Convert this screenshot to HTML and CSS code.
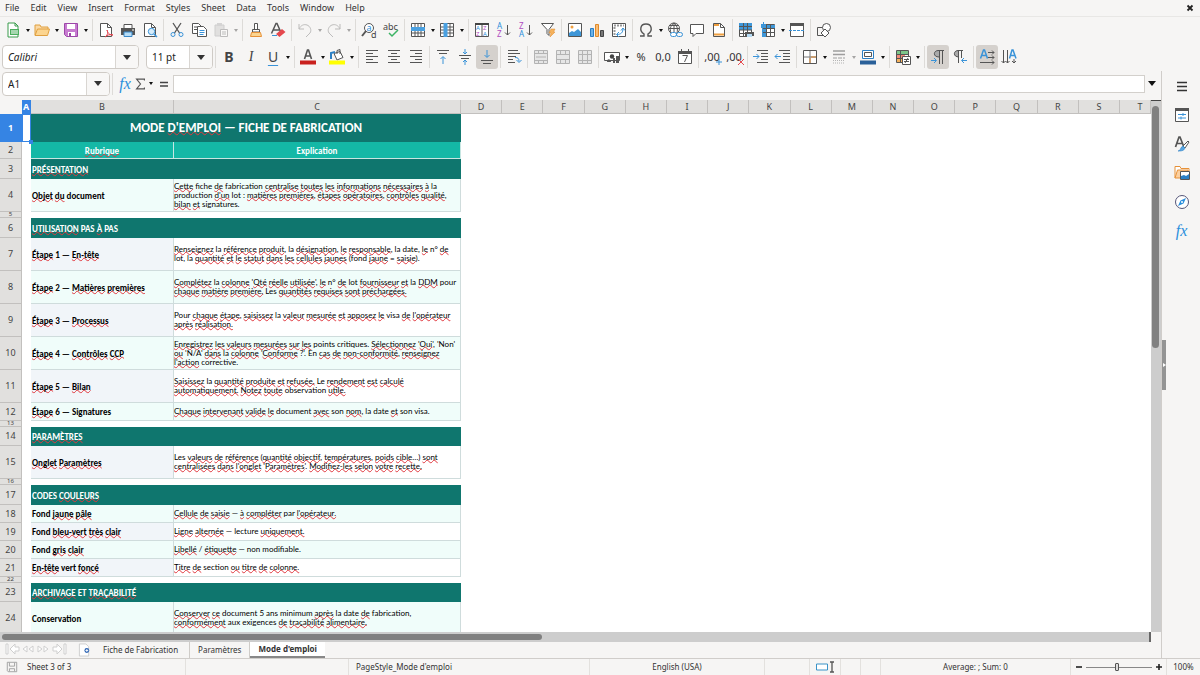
FILE: index.html
```html
<!DOCTYPE html>
<html lang="fr">
<head>
<meta charset="utf-8">
<title>Mode d'emploi</title>
<link rel="stylesheet" href="styles.css">
</head>
<body>
<header class="menubar">
  <nav class="menus">
    <button>File</button><button>Edit</button><button>View</button><button>Insert</button><button>Format</button><button>Styles</button><button>Sheet</button><button>Data</button><button>Tools</button><button>Window</button><button>Help</button>
  </nav>
  <button class="close" aria-label="Close"><svg viewBox="0 0 8 8"><path d="M1.5 1.5l5 5M6.500 1.500l-5 5" stroke="#222" stroke-width="1.800"/></svg></button>
</header>

<div class="toolbar">
  <button aria-label="New"><svg viewBox="0 0 16 16"><path class="w" d="M3 1h7l3 3v11H3z" style="stroke:#3a9b4c"/><path d="M10 1v3h3" stroke="#3a9b4c"/><path fill="#4cae5e" d="M5 7h9v6H5z"/><path d="M6 9h7M6 11h7" stroke="#fff"/></svg></button><button class="dd" aria-label="New options"></button>
  <button aria-label="Open"><svg viewBox="0 0 16 16"><path d="M1 13V3h5l1 2h7v3" fill="#fbd9a5" stroke="#e0a040"/><path d="M1 13.500L3.500 7H15.500l-2 6.500z" fill="#fcd590" stroke="#e0a040"/></svg></button><button class="dd" aria-label="Open options"></button>
  <button aria-label="Save"><svg viewBox="0 0 16 16"><path d="M1.500 1.500h13v13h-11l-2-2z" fill="#c77bd0" stroke="#9c46a8"/><path d="M4 2h8v5H4z" fill="#fff"/><path d="M5 10h7v4H5z" fill="#fff"/><path d="M6 11h2v3H6z" fill="#9c46a8"/></svg></button><button class="dd" aria-label="Save options"></button>
  <i class="sep"></i>
  <button aria-label="Export as PDF"><svg viewBox="0 0 16 16"><path class="w" d="M2.500 1.500h7l4 4v9h-11z"/><path class="k" d="M9.500 1.500v4h4"/><path d="M7 15c3-2 3-5 2-7 1 4 3 5 6 5-3-1-6 0-8 2z" fill="#fff" stroke="#e2404a"/></svg></button>
  <button aria-label="Print"><svg viewBox="0 0 16 16"><path d="M1 6h14v7H1z" fill="#555"/><path class="w" d="M4 2.500h8v4H4z"/><path d="M4 10h8v4.500H4z" fill="#b7dcf5" stroke="#3a89c9"/><path d="M12 8h2" stroke="#fff"/></svg></button>
  <button aria-label="Print preview"><svg viewBox="0 0 16 16"><path class="w" d="M2.500 1.500h7l4 4v9h-11z"/><path class="k" d="M9.500 1.500v4h4"/><circle cx="9.500" cy="9.500" r="3.200" fill="#d7ecfa" stroke="#3a93d8"/><path d="M12 12l3 3" stroke="#3a93d8" stroke-width="1.500"/></svg></button>
  <i class="sep"></i>
  <button aria-label="Cut"><svg viewBox="0 0 16 16"><path class="k" d="M4 1l6.500 10M12 1L5.500 11" style="stroke-width:1.300"/><circle class="b" cx="4" cy="12.500" r="2"/><circle class="b" cx="12" cy="12.500" r="2"/></svg></button>
  <button aria-label="Copy"><svg viewBox="0 0 16 16"><path class="w" d="M1.500 1.500h6l3 3v7h-9z"/><path class="w" d="M6.500 4.500h6l3 3v7h-9z"/><path class="k" d="M3 5h3M3 7.500h3"/><path class="b" d="M8.500 8.500h5M8.500 10.500h5M8.500 12.500h4"/></svg></button>
  <button class="off" aria-label="Paste"><svg viewBox="0 0 16 16"><path d="M2 3h9v11H2z" fill="#bbb" stroke="#888"/><path d="M4 1h5v3H4z" fill="#999"/><path class="w" d="M7.500 7.500h7v7h-7z"/><path class="k" d="M9 10h4M9 12h4"/></svg></button><button class="dd off" aria-label="Paste options"></button>
  <i class="sep"></i>
  <button aria-label="Clone formatting"><svg viewBox="0 0 16 16"><path class="w" d="M6.500 1.500h3v6h-3z"/><path class="w" d="M4.500 7.500h7v2.500h-7z"/><path d="M3.500 10.500h9l1 4h-11z" fill="#fcd590" stroke="#e69138"/></svg></button>
  <button aria-label="Clear formatting"><svg viewBox="0 0 16 16"><path class="k" d="M1.500 11.500L6 1.500h1l4 9M3.500 8h6" style="stroke-width:1.500"/><path d="M6 12l6-5 3.500 3-6 5z" fill="#e5484d"/><path d="M2 13.500h5" stroke="#3a93d8"/></svg></button>
  <i class="sep"></i>
  <button class="off" aria-label="Undo"><svg viewBox="0 0 16 16"><path class="k" d="M2 2v5h5M2 7c2-4 5-5 8-4s5 5 3 8l-4 4"/></svg></button><button class="dd off" aria-label="Undo options"></button>
  <button class="off" aria-label="Redo"><svg viewBox="0 0 16 16"><path class="k" d="M14 2v5H9M14 7c-2-4-5-5-8-4s-5 5-3 8l4 4"/></svg></button><button class="dd off" aria-label="Redo options"></button>
  <i class="sep"></i>
  <button aria-label="Find and replace"><svg viewBox="0 0 16 16"><circle cx="8" cy="6" r="4.500" fill="#fff" class="k"/><path class="k" d="M5 9l-4 5" style="stroke-width:2"/><text x="5.500" y="8.500" class="g blue">a</text><text x="10" y="15.500" class="g">d</text></svg></button>
  <button aria-label="Spelling"><svg viewBox="0 0 16 16"><text x="0" y="8" class="g">abc</text><path d="M6 11l3 3 6-6" stroke="#3cb464" stroke-width="1.500"/></svg></button>
  <i class="sep"></i>
  <button aria-label="Row"><svg viewBox="0 0 16 16"><path class="w" d="M1.500 1.500h13v13h-13z"/><path class="k" d="M5 2v12M8 2v12M11 2v12M2 11h12"/><path d="M1 5h14v4H1z" fill="#4aa0e0"/></svg></button><button class="dd" aria-label="Row options"></button>
  <button aria-label="Column"><svg viewBox="0 0 16 16"><path class="w" d="M1.500 1.500h13v13h-13z"/><path class="k" d="M11 2v12M2 5h12M2 8h12M2 11h12"/><path d="M4.500 1h4v14h-4z" fill="#4aa0e0"/></svg></button><button class="dd" aria-label="Column options"></button>
  <i class="sep"></i>
  <button aria-label="Sort"><svg viewBox="0 0 16 16"><path class="w" d="M1.500 1.500h13v13h-13zM8 3v12"/><path d="M1 1h14v2H1z" fill="#444"/><text x="2" y="8" class="g s blue">A</text><text x="2" y="14" class="g s violet">Z</text><text x="9" y="8" class="g s violet">Z</text><text x="9" y="14" class="g s blue">A</text></svg></button>
  <button aria-label="Sort ascending"><svg viewBox="0 0 16 16"><text x="1" y="7" class="g m blue">A</text><text x="1" y="15" class="g m violet">Z</text><path class="k" d="M11.500 3v10M9 10.500l2.500 2.500 2.500-2.500"/></svg></button>
  <button aria-label="Sort descending"><svg viewBox="0 0 16 16"><text x="1" y="7" class="g m violet">Z</text><text x="1" y="15" class="g m blue">A</text><path class="k" d="M11.500 3v10M9 10.500l2.500 2.500 2.500-2.500"/></svg></button>
  <button aria-label="AutoFilter"><svg viewBox="0 0 16 16"><path class="w" d="M1.500 1.500h12L9 7.500v6l-2-2v-4z"/><path d="M11 7h4l-1.500 3H15l-5 5 1-4H9z" fill="#f5b25c" stroke="#e08a2a" stroke-width=".5"/></svg></button>
  <i class="sep"></i>
  <button aria-label="Image"><svg viewBox="0 0 16 16"><path class="w" d="M1.500 1.500h13v13h-13z"/><circle cx="5" cy="5" r="1.500" fill="#f0a040"/><path d="M2 14v-3l3-2 2 1 4-3 3 3v4z" fill="#3f97d8"/></svg></button>
  <button aria-label="Chart"><svg viewBox="0 0 16 16"><path d="M1.500 6.500h3v8h-3z" fill="#6bb2e8" stroke="#2b7fc4"/><path d="M6.500 2.500h3v12h-3z" fill="#f9bd77" stroke="#e08a2a"/><path d="M11.500 8.500h3v6h-3z" fill="#777" stroke="#444"/></svg></button>
  <button aria-label="Pivot table"><svg viewBox="0 0 16 16"><path class="w" d="M1.500 1.500h13v13h-13z"/><path d="M3 3.500h10M3.500 5v8" stroke="#999" stroke-dasharray="2 1" stroke-width="2"/><path class="b" d="M6 12.500c4 0 6-2 6-6M10 8.500l2-2.500 2 2.500M8 10l-2.500 2.500L8 15"/></svg></button>
  <i class="sep"></i>
  <button aria-label="Special character"><svg viewBox="0 0 16 16"><path class="k" d="M2 14h4v-2C1 9 2 2 8 2s7 7 2 10v2h4" style="stroke-width:1.400"/></svg></button><button class="dd" aria-label="Characters"></button>
  <button aria-label="Hyperlink"><svg viewBox="0 0 16 16"><circle class="w" cx="7" cy="6.500" r="5.500"/><path class="k" d="M7 1v11M1.500 6.500h11M2.500 3.500h9M4 11C2 6 5 2 7 1c3 2 4 6 3 10"/><rect x="3.500" y="10.500" width="6" height="4" rx="2" class="b" fill="#fff"/><rect x="9.500" y="10.500" width="6" height="4" rx="2" class="b"/></svg></button>
  <button aria-label="Comment"><svg viewBox="0 0 16 16"><path class="w" d="M1.500 2.500h13v9H7l-3 3v-3H1.500z"/></svg></button>
  <button aria-label="Headers and footers"><svg viewBox="0 0 16 16"><path class="w" d="M2.500 1.500h7l4 4v9h-11z"/><path class="k" d="M9.500 1.500v4h4"/><path d="M3 3h5M3 12.500h10" stroke="#f0a040" stroke-width="2"/></svg></button>
  <i class="sep"></i>
  <button aria-label="Define print area"><svg viewBox="0 0 16 16"><path class="w" d="M1.500 1.500h12v13h-12z"/><path d="M1 1h13v7H1z" fill="#3f97d8"/><path class="k" d="M5.500 1v13M9.500 1v13M1 4.500h13M1 8h13M1 11.500h8"/><path d="M7 10h9v4H7z" fill="#555"/><path d="M9 12h5v3H9z" fill="#b7dcf5"/></svg></button>
  <button aria-label="Freeze rows and columns"><svg viewBox="0 0 16 16"><path class="w" d="M2.500 2.500h12v12h-12z"/><path d="M1 3h14v3H1zM2 3h4v12H2z" fill="#3f97d8"/><path class="k" d="M6.500 3v11M10.500 3v11M3 6.500h12M3 10.500h12"/><path class="b" d="M3.500 0v5M1 2.500h5"/></svg></button><button class="dd" aria-label="Freeze options"></button>
  <button aria-label="Split window"><svg viewBox="0 0 16 16"><path class="w" d="M1.500 1.500h13v13h-13z"/><path d="M1 1h14v3H1z" fill="#555"/><path class="b" d="M0 8.500h16" stroke-dasharray="3 1"/></svg></button>
  <i class="sep"></i>
  <button aria-label="Draw functions"><svg viewBox="0 0 16 16"><path class="k" d="M1.500 5.500h7v8h-7z"/><circle class="w" cx="10.500" cy="5.500" r="4"/><path class="w" d="M5 11l4-4 4 4-4 4z"/></svg></button>
</div>

<div class="toolbar format">
  <span class="combo font"><select aria-label="Font name"><option>Calibri</option></select><b></b></span>
  <span class="combo size"><select aria-label="Font size"><option>11 pt</option></select><b></b></span>
  <i class="sep"></i>
  <button class="letter bold" aria-label="Bold">B</button>
  <button class="letter ital" aria-label="Italic">I</button>
  <button class="letter under" aria-label="Underline">U</button><button class="dd" aria-label="Underline options"></button>
  <i class="sep"></i>
  <button aria-label="Font color"><svg viewBox="0 0 16 16"><path class="k" d="M4.500 10L7.500 1h1l3 9M5.500 7h5" style="stroke-width:1.600"/><path d="M0 11.500h16v4H0z" fill="#c9211e"/></svg></button><button class="dd" aria-label="Font colors"></button>
  <button aria-label="Background color"><svg viewBox="0 0 16 16"><path class="w" d="M5 4.500l6-2 3 6-6 2.500z"/><path class="k" d="M8 5V1.500l3-1V5"/><path d="M2 10V4l4-1" stroke="#2b7fc4" stroke-width="2"/><path d="M0 11.500h16v4H0z" fill="#ff0"/></svg></button><button class="dd" aria-label="Background colors"></button>
  <i class="sep"></i>
  <button aria-label="Align left"><svg viewBox="0 0 16 16"><path class="k" d="M2 1.500h12M2 4.500h7M2 7.500h12M2 10.500h7M2 13.500h12"/></svg></button>
  <button aria-label="Center horizontally"><svg viewBox="0 0 16 16"><path class="k" d="M2 1.500h12M5 4.500h6M2 7.500h12M5 10.500h6M2 13.500h12"/></svg></button>
  <button aria-label="Align right"><svg viewBox="0 0 16 16"><path class="k" d="M2 1.500h12M7 4.500h7M2 7.500h12M7 10.500h7M2 13.500h12"/></svg></button>
  <i class="sep"></i>
  <button aria-label="Align top"><svg viewBox="0 0 16 16"><path class="k" d="M2 1.500h12M4 4.500h8"/><path class="b" d="M8 15V8M5.500 10L8 7.500l2.500 2.500"/></svg></button>
  <button aria-label="Center vertically"><svg viewBox="0 0 16 16"><path class="k" d="M2 6.500h12M4 9.500h8"/><path class="b" d="M8 0v5M6 3l2 2 2-2M8 16v-5M6 13l2-2 2 2"/></svg></button>
  <button class="on" aria-label="Align bottom"><svg viewBox="0 0 16 16"><path class="k" d="M2 11.500h12M4 14.500h8"/><path class="b" d="M8 1v7M5.500 6L8 8.500 10.500 6"/></svg></button>
  <i class="sep"></i>
  <button aria-label="Wrap text"><svg viewBox="0 0 16 16"><path class="k" d="M2 1.500h10M2 4.500h12M2 7.500h8M2 10.500h5M2 13.500h7"/><path class="b" d="M9 8.500c3 0 4 1 4 4M10.500 11l2.500 2.500 2.500-2.500"/></svg></button>
  <i class="sep"></i>
  <button class="dim" aria-label="Merge and center"><svg viewBox="0 0 16 16"><path d="M1.500 1.500h13v13h-13z" fill="#ddd" stroke="#888"/><path d="M1 4.500h14M1 11.500h14M5.500 1v3M10.500 1v3M5.500 12v3M10.500 12v3M3 8h10" stroke="#888"/></svg></button>
  <button class="dim" aria-label="Merge"><svg viewBox="0 0 16 16"><path d="M1.500 1.500h13v13h-13z" fill="#ddd" stroke="#888"/><path d="M1 5.500h14M1 10.500h14M5.500 1v4M10.500 1v4M5.500 11v4M10.500 11v4" stroke="#888"/></svg></button>
  <button class="dim" aria-label="Unmerge"><svg viewBox="0 0 16 16"><path d="M1.500 1.500h13v13h-13z" fill="#ddd" stroke="#888"/><path d="M1 5.500h14M1 11.500h14M5.500 1v14M10.500 1v14" stroke="#888"/></svg></button>
  <i class="sep"></i>
  <button aria-label="Currency"><svg viewBox="0 0 16 16"><path class="w" d="M.5 3.500h15v8H.5z"/><circle cx="8" cy="7.500" r="2.200" fill="#444"/><path d="M3 13c0-4 4-3 4 0zM9 9h2v5H9zM12 7h3v7h-3z" fill="#555"/></svg></button><button class="dd" aria-label="Currency options"></button>
  <button class="num" aria-label="Percent">%</button>
  <button class="num" aria-label="Number">0,0</button>
  <button aria-label="Date"><svg viewBox="0 0 16 16"><path class="w" d="M1.500 2.500h13v12h-13z"/><path d="M1 2h14v3H1zM4 0h1v2H4zM11 0h1v2h-1z" fill="#555"/><path class="k" d="M5.500 6.500h5l-3 6.500"/></svg></button>
  <i class="sep"></i>
  <button class="num" aria-label="Add decimal place">,00<svg class="mark" viewBox="0 0 6 6"><path class="b" d="M3 0v6M0 3h6"/></svg></button>
  <button class="num" aria-label="Delete decimal place">,00<svg class="mark" viewBox="0 0 6 6"><path d="M0 0l6 6M6 0L0 6" stroke="#e5484d"/></svg></button>
  <i class="sep"></i>
  <button aria-label="Increase indent"><svg viewBox="0 0 16 16"><path class="k" d="M4 1.500h11M8 4.500h7M8 7.500h7M8 10.500h7M4 13.500h11"/><path class="b" d="M0 7.500h6M3.500 5L6 7.500 3.500 10"/></svg></button>
  <button aria-label="Decrease indent"><svg viewBox="0 0 16 16"><path class="k" d="M4 1.500h11M8 4.500h7M8 7.500h7M8 10.500h7M4 13.500h11"/><path class="b" d="M0 7.500h6M2.500 5L0 7.500 2.500 10"/></svg></button>
  <i class="sep"></i>
  <button aria-label="Borders"><svg viewBox="0 0 16 16"><path class="w" d="M1.500 1.500h13v13h-13z"/><path d="M8 2v12M2 8h12" stroke="#777"/><path d="M8 9v5M9 8h5" stroke="#d9822b"/></svg></button><button class="dd" aria-label="Border options"></button>
  <button class="dim" aria-label="Border style"><svg viewBox="0 0 16 16"><path d="M2 2h12M2 5.500h12" stroke="#666" stroke-width="1.500"/><path d="M2 9h12" stroke="#666" stroke-dasharray="4 1"/><path d="M2 11.500h12M2 14h12" stroke="#888" stroke-dasharray="1 1"/></svg></button><button class="dd off" aria-label="Border styles"></button>
  <button aria-label="Border color"><svg viewBox="0 0 16 16"><path class="w" d="M2.500 1.500h11v8h-11z" style="stroke:#2b7fc4"/><path d="M4.500 3.500h7v4h-7z" class="k"/><path d="M0 11.500h16v4H0z" fill="#2a6099"/></svg></button><button class="dd" aria-label="Border colors"></button>
  <i class="sep"></i>
  <button aria-label="Conditional formatting"><svg viewBox="0 0 16 16"><path class="w" d="M1.500 1.500h12v12h-12z"/><path d="M2 2h11v3H2z" fill="#7cc68a"/><path d="M2 5.500h8V9H2z" fill="#f08a7a"/><path d="M2 9.500h5V13H2z" fill="#f5b25c"/><path class="k" d="M1 5.500h12M1 9.500h6M5.500 2v11"/><path class="w" d="M7.500 7.500h8v8h-8z"/><path class="k" d="M9 10.500h5M9 12.500h5M13 9l-3 5"/></svg></button><button class="dd" aria-label="Conditional options"></button>
  <i class="sep"></i>
  <button class="on" aria-label="Left to right"><svg viewBox="0 0 16 16"><path d="M9 8C2 8 3 1 9 1z" fill="#aaa"/><path class="k" d="M14 1.500H8C3 2 3 8 9 8M9.500 2v13M12.500 2v13"/><path class="b" d="M1 11.500h5M4 9l2.500 2.500L4 14"/></svg></button>
  <button aria-label="Right to left"><svg viewBox="0 0 16 16"><path d="M7 8C0 8 1 1 7 1z" fill="#aaa"/><path class="k" d="M11 1.500H6C1 2 1 8 7 8M6.500 2v12M9.500 2v7"/><path class="b" d="M15 11.500h-5M12 9l-2.500 2.500L12 14"/></svg></button>
  <i class="sep"></i>
  <button class="on" aria-label="Text direction horizontal"><svg viewBox="0 0 16 16"><path d="M1.500 9.500L4.500 1h1l3 8.500M2.500 6.500h5" stroke="#3a93d8" stroke-width="1.500"/><path class="k" d="M9 3.500h6M13 1.500l2 2-2 2M9 8.500h6M13 6.500l2 2-2 2M1 13.500h14M13 11.500l2 2-2 2"/></svg></button>
  <button aria-label="Text direction vertical"><svg viewBox="0 0 16 16"><path d="M8.500 9.500L11 1h1l3 8.500M9.500 6.500h5" stroke="#3a93d8" stroke-width="1.500"/><path class="k" d="M2.500 1v13M.5 12l2 2 2-2M6.500 1v13M4.500 12l2 2 2-2M13 10v4M11 12l2 2 2-2"/></svg></button>
</div>

<main class="main">
  <section class="work">
    <div class="formulabar">
      <span class="combo name"><select aria-label="Name box"><option>A1</option></select><b></b></span>
      <i class="sep"></i>
      <button class="fx" aria-label="Function wizard">fx</button>
      <button class="sum" aria-label="Select function"><svg viewBox="0 0 12 16"><path class="k" d="M10.500 4V2.500h-9L6 8l-4.500 5.500h9V12" style="stroke-width:1.300"/></svg></button><button class="dd" aria-label="Functions"></button>
      <button class="eq" aria-label="Formula"><svg viewBox="0 0 10 10"><path d="M1 3.500h8M1 7h8" stroke="#444" stroke-width="1.600"/></svg></button>
      <input type="text" aria-label="Formula input">
      <button class="dd wide" aria-label="Expand formula bar"></button>
    </div>
    <div class="gridrow">
      <div class="sheet">
        <table>
          <colgroup><col class="cr"><col class="ca"><col class="cb"><col class="cc"><col span="16"><col class="ct"></colgroup>
          <thead><tr><th></th><th class="sel">A</th><th>B</th><th>C</th><th>D</th><th>E</th><th>F</th><th>G</th><th>H</th><th>I</th><th>J</th><th>K</th><th>L</th><th>M</th><th>N</th><th>O</th><th>P</th><th>Q</th><th>R</th><th>S</th><th class="cut">T</th></tr></thead>
          <tbody>
            <tr class="r28"><th class="sel">1</th><td class="cursor"></td><td colspan="2" class="title">MODE <u>D'EMPLOI</u> — FICHE DE FABRICATION</td></tr>
            <tr class="r17"><th>2</th><td></td><td class="sub"><u>Rubrique</u></td><td class="sub">Explication</td></tr>
            <tr class="r20"><th>3</th><td></td><td colspan="2" class="section"><u>PRÉSENTATION</u></td></tr>
            <tr class="r33 mint"><th>4</th><td></td><td class="lab"><u>Objet</u> <u>du</u> document</td><td class="txt"><u>Cette</u> fiche <u>de</u> fabrication <u>centralise</u> <u>toutes</u> <u>les</u> <u>informations</u> <u>nécessaires</u> <u>à</u> la<br>production <u>d'un</u> lot : <u>matières</u> <u>premières</u>, <u>étapes</u> <u>opératoires</u>, <u>contrôles</u> <u>qualité</u>,<br><u>bilan</u> <u>et</u> signatures.</td></tr>
            <tr class="r6"><th>5</th></tr>
            <tr class="r20"><th>6</th><td></td><td colspan="2" class="section"><u>UTILISATION</u> PAS <u>À</u> PAS</td></tr>
            <tr class="r33"><th>7</th><td></td><td class="lab"><u>Étape</u> 1 — <u>En-tête</u></td><td class="txt"><u>Renseignez</u> la <u>référence</u> <u>produit</u>, la <u>désignation</u>, <u>le</u> <u>responsable</u>, la date, <u>le</u> n° <u>de</u><br>lot, la <u>quantité</u> <u>et</u> <u>le</u> <u>statut</u> <u>dans</u> <u>les</u> <u>cellules</u> <u>jaunes</u> (fond <u>jaune</u> = <u>saisie</u>).</td></tr>
            <tr class="r33 mint"><th>8</th><td></td><td class="lab"><u>Étape</u> 2 — <u>Matières</u> <u>premières</u></td><td class="txt"><u>Complétez</u> la <u>colonne</u> '<u>Qté</u> <u>réelle</u> <u>utilisée</u>', <u>le</u> n° <u>de</u> lot <u>fournisseur</u> <u>et</u> la <u>DDM</u> pour<br><u>chaque</u> <u>matière</u> <u>première.</u> Les <u>quantités</u> <u>requises</u> <u>sont</u> <u>préchargées.</u></td></tr>
            <tr class="r33"><th>9</th><td></td><td class="lab"><u>Étape</u> 3 — <u>Processus</u></td><td class="txt">Pour <u>chaque</u> <u>étape</u>, <u>saisissez</u> la <u>valeur</u> <u>mesurée</u> <u>et</u> <u>apposez</u> <u>le</u> visa <u>de</u> <u>l'opérateur</u><br><u>après</u> <u>réalisation.</u></td></tr>
            <tr class="r33 mint"><th>10</th><td></td><td class="lab"><u>Étape</u> 4 — <u>Contrôles</u> <u>CCP</u></td><td class="txt"><u>Enregistrez</u> <u>les</u> <u>valeurs</u> <u>mesurées</u> <u>sur</u> <u>les</u> points critiques. <u>Sélectionnez</u> '<u>Oui</u>', 'Non'<br><u>ou</u> 'N/A' <u>dans</u> la <u>colonne</u> '<u>Conforme</u> ?'. En <u>cas</u> <u>de</u> <u>non-conformité</u>, <u>renseignez</u><br><u>l'action</u> corrective.</td></tr>
            <tr class="r33"><th>11</th><td></td><td class="lab"><u>Étape</u> 5 — <u>Bilan</u></td><td class="txt"><u>Saisissez</u> la <u>quantité</u> <u>produite</u> <u>et</u> <u>refusée.</u> Le <u>rendement</u> <u>est</u> <u>calculé</u><br><u>automatiquement.</u> <u>Notez</u> <u>toute</u> observation <u>utile.</u></td></tr>
            <tr class="r18 mint"><th>12</th><td></td><td class="lab"><u>Étape</u> 6 — Signatures</td><td class="txt"><u>Chaque</u> <u>intervenant</u> <u>valide</u> <u>le</u> document <u>avec</u> son <u>nom</u>, la date <u>et</u> son visa.</td></tr>
            <tr class="r6"><th>13</th></tr>
            <tr class="r19"><th>14</th><td></td><td colspan="2" class="section"><u>PARAMÈTRES</u></td></tr>
            <tr class="r33"><th>15</th><td></td><td class="lab"><u>Onglet</u> <u>Paramètres</u></td><td class="txt">Les <u>valeurs</u> <u>de</u> <u>référence</u> (<u>quantité</u> <u>objectif</u>, <u>températures</u>, <u>poids</u> <u>cible</u>…) <u>sont</u><br><u>centralisées</u> <u>dans</u> <u>l'onglet</u> '<u>Paramètres</u>'. <u>Modifiez-les</u> <u>selon</u> <u>votre</u> <u>recette.</u></td></tr>
            <tr class="r6"><th>16</th></tr>
            <tr class="r20"><th>17</th><td></td><td colspan="2" class="section">CODES <u>COULEURS</u></td></tr>
            <tr class="r18 mint"><th>18</th><td></td><td class="lab">Fond <u>jaune</u> <u>pâle</u></td><td class="txt"><u>Cellule</u> <u>de</u> <u>saisie</u> — <u>à</u> <u>compléter</u> par <u>l'opérateur.</u></td></tr>
            <tr class="r18"><th>19</th><td></td><td class="lab">Fond <u>bleu-vert</u> <u>très</u> <u>clair</u></td><td class="txt"><u>Ligne</u> <u>alternée</u> — lecture <u>uniquement.</u></td></tr>
            <tr class="r18 mint"><th>20</th><td></td><td class="lab">Fond <u>gris</u> <u>clair</u></td><td class="txt"><u>Libellé</u> / <u>étiquette</u> — non modifiable.</td></tr>
            <tr class="r18"><th>21</th><td></td><td class="lab"><u>En-tête</u> vert <u>foncé</u></td><td class="txt"><u>Titre</u> <u>de</u> section <u>ou</u> <u>titre</u> <u>de</u> <u>colonne.</u></td></tr>
            <tr class="r6"><th>22</th></tr>
            <tr class="r19"><th>23</th><td></td><td colspan="2" class="section"><u>ARCHIVAGE</u> ET <u>TRAÇABILITÉ</u></td></tr>
            <tr class="r33 mint"><th>24</th><td></td><td class="lab">Conservation</td><td class="txt"><u>Conserver</u> <u>ce</u> document 5 ans minimum <u>après</u> la date <u>de</u> fabrication,<br><u>conformément</u> aux exigences <u>de</u> <u>traçabilité</u> <u>alimentaire.</u></td></tr>
          </tbody>
        </table>
      </div>
      <div class="vscroll"><div class="thumb"></div></div>
    </div>
    <div class="hscroll"><div class="thumb"></div></div>
    <div class="tabs">
      <svg class="nav" viewBox="0 0 62 14"><path d="M1 2h2v10H1zM10 2L5 7l5 5V9h4V5h-4zM22 4l-4 3 4 3zM28 4l-4 3 4 3zM33 4l4 3-4 3zM39 4l4 3-4 3zM52 2l5 5-5 5V9h-4V5h4zM59 2h2v10h-2z" stroke="#cfcfcf" fill="#fff"/></svg>
      <button class="add" aria-label="Add sheet"><svg viewBox="0 0 14 14"><path d="M1.500.5h7l3 3v10h-10z" fill="#fff" stroke="#ccc"/><circle cx="9.500" cy="7.500" r="2.600" fill="#2f66b5"/><path d="M9.500 6v3M8 7.500h3" stroke="#fff"/></svg></button>
      <button class="tab">Fiche de Fabrication</button><button class="tab">Paramètres</button><button class="tab active">Mode d'emploi</button>
    </div>
  </section>
  <aside class="side">
    <button class="handle" aria-label="Hide sidebar"></button>
    <div class="deck">
    <button aria-label="Sidebar settings"><svg viewBox="0 0 16 16"><path d="M3 4.500h10M3 8.500h10M3 12.500h10" stroke="#333" stroke-width="1.500"/></svg></button>
    <button aria-label="Properties"><svg viewBox="0 0 16 16"><path class="w" d="M1.500 1.500h13v13h-13z"/><path d="M1 1h14v3H1z" fill="#555"/><path class="b" d="M4 7.500h8M4 11h8M9 6v3M7 9.500v3"/></svg></button>
    <button aria-label="Styles"><svg viewBox="0 0 16 16"><path class="k" d="M1.500 11L5 1h1l3.500 9M2.500 7.500h6" style="stroke-width:1.700"/><path class="w" d="M9 10l5-5 1 1-4 6z"/><path d="M4 15c3 0 2-4 5-5l2 2c-1 3-4 3-7 3z" fill="#5aa7e2" stroke="#2b7fc4" stroke-width=".6"/></svg></button>
    <button aria-label="Gallery"><svg viewBox="0 0 16 16"><path d="M1 13V1.500h5l1 2h8V6" fill="#fff" stroke="#e69138"/><path d="M1 13L3.500 5H14v8z" fill="#fcd0a0" stroke="#e69138"/><path d="M6.500 6.500h9v8h-9z" class="w"/><path d="M7 14v-3l3-1 2 1 3-2v5z" fill="#2b7fc4"/></svg></button>
    <button aria-label="Navigator"><svg viewBox="0 0 16 16"><circle cx="8" cy="8" r="6.500" class="w" style="stroke:#557"/><path d="M12 4l-2.500 5.500L4 12l2.500-5.500z" fill="#2b8fdc"/><circle cx="8" cy="8" r="1" fill="#fff"/></svg></button>
    <button class="fx" aria-label="Functions">fx</button>
    </div>
  </aside>
</main>

<footer class="status">
  <span class="st first"><svg viewBox="0 0 14 14"><path d="M1.500 1.500h11v11h-10l-1-1zM4 2v4h6V2M4 12V9h6v3" stroke="#999"/></svg>Sheet 3 of 3</span>
  <span class="st"></span>
  <span class="st left">PageStyle_Mode d'emploi</span>
  <span class="st">English (USA)</span>
  <span class="st"></span>
  <span class="st"><svg class="ins" viewBox="0 0 20 12"><path d="M1.500 3h11v6h-11z" fill="#fff" stroke="#3a93c8"/><path class="k" d="M15 1h4M17 1v10M15 11h4" style="stroke-width:1.300"/></svg></span>
  <span class="st"></span>
  <span class="st"></span>
  <span class="st">Average: ; Sum: 0</span>
  <span class="st zoom"><button aria-label="Zoom out"><svg viewBox="0 0 8 8"><path d="M1 4h6" stroke="#222" stroke-width="1.600"/></svg></button><input type="range" min="0" max="100" value="48" aria-label="Zoom"><button aria-label="Zoom in"><svg viewBox="0 0 8 8"><path d="M1 4h6M4 1v6" stroke="#222" stroke-width="1.600"/></svg></button></span>
  <span class="st pct">100%</span>
</footer>
</body>
</html>
```
FILE: styles.css
```css
* { box-sizing: border-box; }
body {
  margin: 0;
  height: 100vh;
  display: flex;
  flex-direction: column;
  overflow: hidden;
  background: #f6f5f4;
  color: #333;
  font: 9px/14px "Noto Sans", sans-serif;
}
button {
  border: 0;
  padding: 0;
  margin: 0;
  background: none;
  color: inherit;
  font: inherit;
}
svg { display: block; fill: none; overflow: visible; }
.k { stroke: #555; }
.w { stroke: #555; fill: #fff; }
.b { stroke: #3a93d8; }
.g { font: 9px "Noto Sans", sans-serif; fill: #444; }
.g.m { font-size: 8px; }
.g.s { font-size: 6px; }
.g.blue { fill: #2b8fdc; }
.g.violet { fill: #b04cc0; }

.menubar {
  display: flex;
  justify-content: space-between;
  height: 17px;
  padding-left: 5px;
  flex: none;
  border-bottom: 1px solid #e8e7e5;
}
.menus { display: flex; gap: 11px; }
.close { width: 21px; display: grid; place-items: center; }
.close svg { width: 8px; height: 8px; }

.toolbar {
  display: flex;
  align-items: center;
  flex: none;
  height: 26px;
  padding-left: 2px;
}
.toolbar button {
  width: 22px;
  height: 24px;
  flex: none;
  display: grid;
  place-items: center;
  border-radius: 3px;
}
.toolbar button svg { width: 16px; height: 16px; }
.toolbar .on { background: #d5d1cd; }
.toolbar .off { opacity: .35; }
.toolbar .dim { opacity: .6; }
button.dd { width: 7px; height: 24px; flex: none; display: grid; place-items: center; }
.toolbar button.dd { width: 7px; }
button.dd::before {
  content: "";
  border: 2px solid transparent;
  border-top: 3px solid #111;
  border-bottom: 0;
}
button.dd.wide { width: 14px; }
button.dd.wide::before { border-width: 5px 4px 0; }
.sep { flex: none; width: 1px; height: 22px; margin: 0 2px; background: #dddbd8; }
.dd + .sep { margin-left: 3px; }
.letter { font-size: 14px; line-height: 20px; color: #444; }
.toolbar .bold { font-weight: 700; }
.toolbar .ital { font-family: "Liberation Serif", serif; font-style: italic; }
.toolbar .under { text-decoration: underline #3a93d8; text-underline-offset: 3px; }
.toolbar .num { font-size: 11px; position: relative; }
.toolbar .num .mark { position: absolute; right: 1px; bottom: 4px; width: 6px; height: 6px; }

.toolbar.format { height: 28px; }
.combo {
  display: grid;
  flex: none;
  height: 24px;
  border: 1px solid #cfcbc6;
  border-radius: 4px;
  background: #fff;
  overflow: hidden;
}
.combo select {
  grid-area: 1 / 1;
  width: 100%;
  appearance: none;
  border: 0;
  background: none;
  padding: 0 0 0 5px;
  font: 10px/20px "Noto Sans", sans-serif;
  color: #222;
}
.combo b {
  grid-area: 1 / 1;
  justify-self: end;
  width: 23px;
  display: grid;
  place-items: center;
  pointer-events: none;
  background: #f8f7f6;
  border-left: 1px solid #d9d6d2;
}
.combo b::before { content: ""; border: 4px solid transparent; border-top: 5px solid #333; border-bottom: 0; }
.font { width: 137px; margin-right: 7px; }
.combo.font select { font-style: italic; }
.size { width: 67px; }
.name { width: 108px; }

.main { flex: 1; min-height: 0; display: flex; }
.work { flex: 1; min-width: 0; display: flex; flex-direction: column; }
.formulabar { flex: none; display: flex; align-items: center; height: 29px; padding: 0 2px 4px; }
.formulabar input {
  flex: 1;
  min-width: 0;
  height: 18px;
  border: 1px solid #d3d0cc;
  background: #fff;
}
.fx { width: 20px; font: italic 16px/20px "Liberation Serif", serif; color: #2b8fdc; }
.sum { width: 12px; }
.sum svg { width: 11px; height: 14px; }
.eq { width: 19px; display: grid; place-items: center; }
.eq svg { width: 10px; height: 10px; }

.gridrow { flex: 1; min-height: 0; display: flex; }
.sheet { flex: 1; min-width: 0; overflow: hidden; background: #fff; }
.sheet table { width: 100%; table-layout: fixed; border-spacing: 0; }
.cr { width: 22px; }
.ca { width: 9px; }
.cb { width: 143px; }
.cc { width: 287px; }
.ct { width: 31px; }
.sheet th {
  padding: 0;
  height: 14px;
  font: 9px/12px "Noto Sans", sans-serif;
  color: #444;
  background: #e1e0de;
  border-right: 1px solid #c2c0be;
  border-bottom: 1px solid #c2c0be;
}
.sheet thead th:first-child { background: #f6f5f4; border-color: #f6f5f4; }
.sheet th.sel { background: #3584e4; color: #fff; font-weight: 700; border-color: #3584e4; }
.sheet th.cut { padding-left: 10px; }
.sheet td {
  padding: 0;
  font: 9px/9px Carlito, Lato, sans-serif;
  color: #000;
  white-space: nowrap;
}
.sheet td.txt { font: 8px/9px Lato, sans-serif; }
.sheet u { text-decoration: underline wavy 1px #e0383e; text-decoration-skip-ink: none; text-underline-offset: -1px; }
.r28 { height: 28px; }
.r17 { height: 17px; }
.r18 { height: 18px; }
.r19 { height: 19px; }
.r20 { height: 20px; }
.r33 { height: 33px; }
.r6 { height: 6px; }
.sheet .r6 th { height: 6px; font-size: 6px; line-height: 5px; }
.sheet .title { background: #0f766e; color: #fff; font-size: 13px; line-height: 14px; font-weight: 700; text-align: center; }
.sheet .sub { background: #14b8a6; color: #fff; font-weight: 700; text-align: center; border-bottom: 1px solid #c7e6e2; border-right: 1px solid #c7e6e2; }
.sheet .section { background: #0f766e; color: #fff; font-weight: 700; padding-left: 1px; }
.sheet .lab { background: #f1f5f9; font-weight: 700; padding-left: 1px; }
.sheet .lab, .sheet .txt { border-right: 1px solid #cfdcdc; border-bottom: 1px solid #cfdcdc; }
.sheet .mint .lab, .sheet .mint .txt { background: #f0fdfa; }
.sheet .cursor { position: relative; outline: 1px solid #3584e4; outline-offset: -1px; }
.cursor::after {
  content: "";
  position: absolute;
  right: -2px;
  bottom: -2px;
  width: 4px;
  height: 4px;
  background: #3584e4;
}
.vscroll { flex: none; width: 10px; padding: 5px 2px 0 1px; background: #cdcdcd; border-top: 1px solid #444; }
.vscroll .thumb { height: 46%; border-radius: 4px; background: #808080; }
.hscroll { flex: none; height: 10px; margin-right: 10px; padding: 2px; background: #cdcdcd; border-right: 2px solid #666; }
.hscroll .thumb { width: 47.2%; height: 6px; border-radius: 3px; background: #808080; }
.tabs { flex: none; height: 16px; display: flex; align-items: stretch; padding-left: 5px; font-size: 8px; }
.nav { width: 62px; height: 14px; }
.add { width: 26px; padding-left: 11px; }
.add svg { width: 13px; height: 14px; }
.tab { padding: 0 8px; border-right: 1px solid #cfccc8; }
.add + .tab { padding: 0 11px 0 10px; }
.tab.active { background: #fff; font-weight: 700; border-right: 0; border-bottom: 2px solid #888; }

.side { flex: none; width: 39px; display: flex; border-left: 1px solid #d0cdca; }
.handle { align-self: center; width: 4px; height: 50px; flex: none; background: #949494; display: grid; place-items: center; }
.handle::before { content: ""; border: 2px solid transparent; border-left: 3px solid #fff; border-right: 0; }
.deck { flex: 1; display: flex; flex-direction: column; align-items: center; padding: 0 3px 0 0; }
.side .deck button { width: 29px; height: 29px; display: grid; place-items: center; }
.side svg { width: 16px; height: 16px; }

.status {
  flex: none;
  height: 17px;
  display: grid;
  grid-template-columns: 186fr 163fr 241fr 175fr 45fr 31fr 20fr 20fr 190fr 96fr 33fr;
  border-top: 1px solid #d0cdca;
  font-size: 8px;
}
.st { display: flex; align-items: center; justify-content: center; min-width: 0; white-space: nowrap; border-right: 1px solid #e3e1de; }
.st:nth-child(n+6):nth-child(-n+6) { justify-content: center; }
.st.first { justify-content: flex-start; gap: 9px; padding-left: 6px; }
.st.first svg { width: 12px; height: 12px; }
.st.left { justify-content: flex-start; padding-left: 7px; }
.st.pct { border: 0; }
.ins { width: 20px; height: 12px; }
.zoom button svg { width: 8px; height: 8px; }
.zoom input { appearance: none; width: 66px; height: 10px; margin: 0 3px; background: linear-gradient(#888, #888) center / 100% 1px no-repeat; }
.zoom input::-webkit-slider-thumb { appearance: none; width: 4px; height: 8px; border: 1px solid #555; border-radius: 1px; background: #ddd; }
```
